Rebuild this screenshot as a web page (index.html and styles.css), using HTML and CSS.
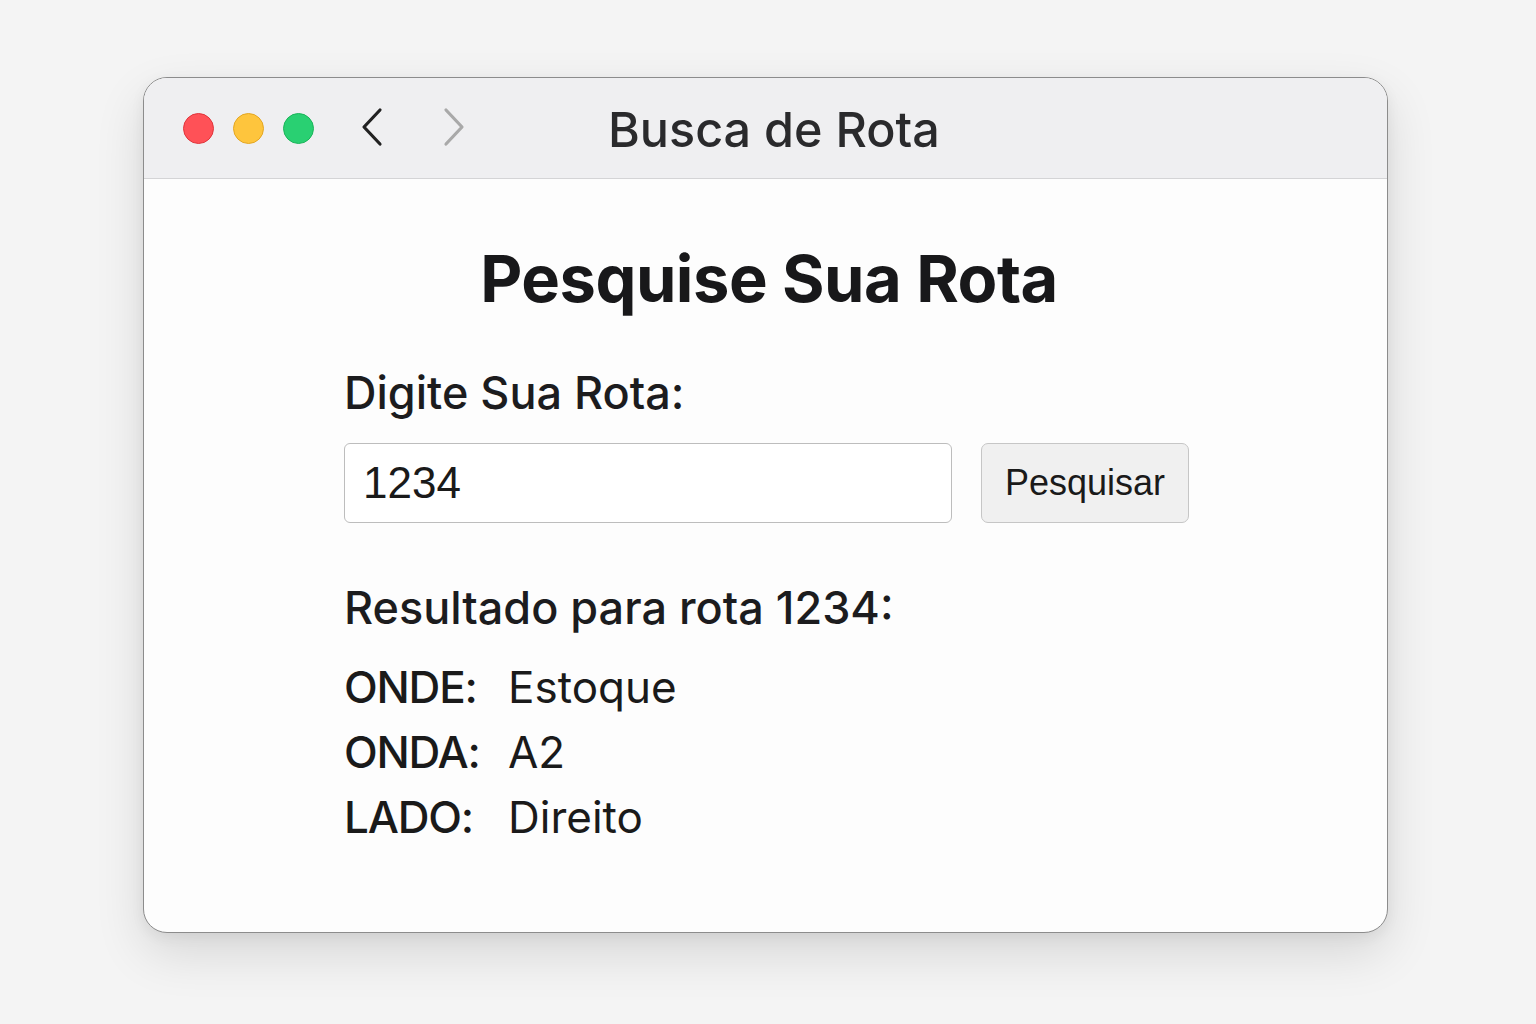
FILE: index.html
```html
<!DOCTYPE html>
<html lang="pt">
<head>
<meta charset="utf-8">
<title>Busca de Rota</title>
<link rel="stylesheet" href="styles.css">
</head>
<body>
<div class="window">
  <div class="titlebar">
    <div class="lights">
      <span class="light red"></span>
      <span class="light yellow"></span>
      <span class="light green"></span>
    </div>
    <div class="nav">
      <svg class="chev" width="26" height="40" viewBox="0 0 26 40"><path d="M20 3 L4 20 L20 37" fill="none" stroke="#222" stroke-width="3.2" stroke-linecap="round" stroke-linejoin="round"/></svg>
      <svg class="chev fwd" width="26" height="40" viewBox="0 0 26 40"><path d="M6 3 L22 20 L6 37" fill="none" stroke="#a9a9a9" stroke-width="3.2" stroke-linecap="round" stroke-linejoin="round"/></svg>
    </div>
    <div class="title">Busca de Rota</div>
  </div>
  <div class="content">
    <h1 class="heading">Pesquise Sua Rota</h1>
    <div class="form">
      <label class="label" for="rota">Digite Sua Rota:</label>
      <div class="row">
        <input id="rota" class="input" type="text" value="1234">
        <button class="btn">Pesquisar</button>
      </div>
      <div class="result-title">Resultado para rota 1234:</div>
      <div class="results">
        <div class="k">ONDE:</div><div class="v">Estoque</div>
        <div class="k">ONDA:</div><div class="v">A2</div>
        <div class="k">LADO:</div><div class="v">Direito</div>
      </div>
    </div>
  </div>
</div>
</body>
</html>
```
FILE: styles.css
```css
* { box-sizing: border-box; }
html, body { margin: 0; padding: 0; }
body {
  width: 1536px;
  height: 1024px;
  background: #f4f4f4;
  font-family: Inter, "Noto Sans", sans-serif;
  color: #1c1c1e;
  padding-top: 77px;
  padding-left: 143px;
}
.window {
  width: 1245px;
  height: 856px;
  border: 1px solid #8c8c8c;
  border-radius: 24px;
  background: #fdfdfd;
  overflow: hidden;
  box-shadow: 0 20px 50px rgba(0,0,0,0.12), 0 4px 14px rgba(0,0,0,0.06);
  display: flex;
  flex-direction: column;
}
.titlebar {
  height: 101px;
  background: #efeff1;
  border-bottom: 1px solid #d4d4d6;
  display: flex;
  align-items: center;
  padding-left: 39px;
  flex-shrink: 0;
}
.lights { display: flex; gap: 19px; }
.light {
  width: 31px; height: 31px; border-radius: 50%;
  display: block;
}
.red { background: #ff5157; border: 1px solid #e0353c; }
.yellow { background: #fec53d; border: 1px solid #e3a623; }
.green { background: #29d072; border: 1px solid #1bb55a; }
.nav { display: flex; gap: 54px; margin-left: 46px; margin-top: -2px; }
.chev { display: block; }
.title {
  margin-left: 142px;
  font-size: 48.5px;
  font-weight: 500;
  color: #2a2a2c;
  margin-top: 2px;
}
.content {
  flex: 1;
  display: flex;
  flex-direction: column;
  align-items: center;
}
.heading {
  margin: 60px 0 0 0;
  font-size: 65px;
  font-weight: 700;
  letter-spacing: -0.5px;
  line-height: 80px;
  color: #18181a;
  padding-left: 7px;
}
.form {
  width: 847px;
  display: flex;
  flex-direction: column;
  margin-top: 46px;
  padding-left: 2px;
}
.label {
  font-size: 45px;
  font-weight: 500;
  line-height: 56px;
  color: #1c1c1e;
}
.row {
  display: flex;
  gap: 29px;
  margin-top: 22px;
}
.input {
  width: 608px;
  height: 80px;
  border: 1.5px solid #bdbdbd;
  border-radius: 6px;
  background: #fff;
  font-family: "Liberation Sans", Arial, sans-serif;
  font-size: 44px;
  color: #1a1a1a;
  padding: 0 18px;
  outline: none;
}
.btn {
  width: 210px;
  height: 80px;
  border: 1.5px solid #c6c6c6;
  border-radius: 7px;
  background: #f0f0f0;
  font-family: "Liberation Sans", Arial, sans-serif;
  font-size: 36px;
  color: #1a1a1a;
  padding: 0;
}
.result-title {
  margin-top: 57px;
  font-size: 45px;
  font-weight: 500;
  line-height: 56px;
  color: #1c1c1e;
}
.results {
  display: grid;
  grid-template-columns: 164px auto;
  margin-top: 23px;
  row-gap: 9px;
}
.k {
  font-size: 44px;
  font-weight: 500;
  letter-spacing: -1.2px;
  line-height: 56px;
  color: #1a1a1a;
}
.v {
  font-size: 44px;
  font-weight: 400;
  line-height: 56px;
  color: #1a1a1a;
}
```
